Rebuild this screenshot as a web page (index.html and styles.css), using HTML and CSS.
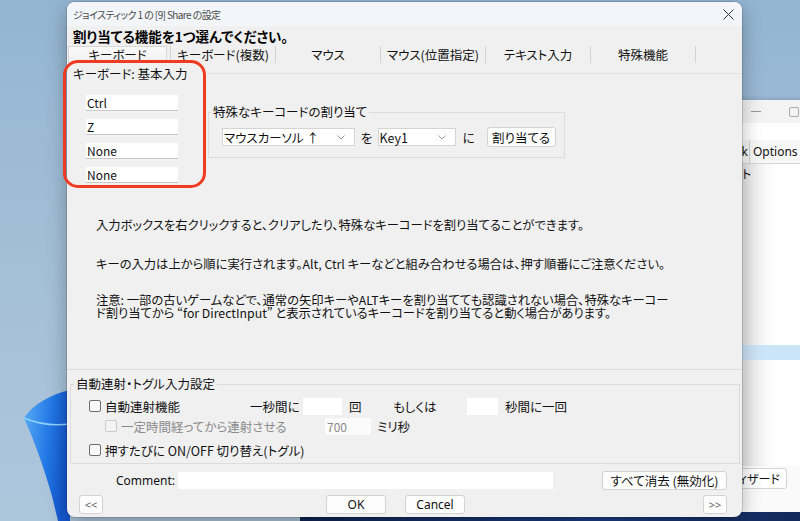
FILE: index.html
```html
<!DOCTYPE html>
<html lang="ja">
<head>
<meta charset="utf-8">
<title>ジョイスティック 1 の [9] Share の設定</title>
<link rel="stylesheet" href="styles.css">
</head>
<body>
<div class="desktop">
  <svg class="bloom" width="80" height="161" viewBox="0 360 80 161">
    <defs>
      <linearGradient id="bl" x1="0" y1="0" x2="1" y2="0.3">
        <stop offset="0" stop-color="#5aaef5"/>
        <stop offset="0.6" stop-color="#2277e6"/>
        <stop offset="1" stop-color="#1458d0"/>
      </linearGradient>
    </defs>
    <path d="M70,390 C52,394 33,404 24,418 C34,440 44,468 52,496 L58,521 L70,521 Z" fill="url(#bl)"/>
    <path d="M24,418 C38,424 54,426 70,424" fill="none" stroke="#8fd2fb" stroke-width="1.5"/>
  </svg>

  <div class="bgwin">
    <div class="bg-title">
      <span class="bg-min"></span>
      <span class="bg-max"></span>
    </div>
    <div class="bg-tool"></div>
    <div class="bg-menu">
      <span class="bg-menu-item bg-hook">Hook</span>
      <span class="bg-sep"></span>
      <span class="bg-menu-item">Options</span>
    </div>
    <div class="bg-list">
      <div class="bg-row">ト</div>
      <div class="bg-sel"></div>
    </div>
    <div class="bg-foot">
      <span class="bg-btn">ウィザード</span>
    </div>
  </div>
  <div class="taskbar"></div>

  <div class="dialog">
    <div class="titlebar">
      <span class="title">ジョイスティック 1 の [9] Share の設定</span>
      <svg class="close" width="11" height="11" viewBox="0 0 11 11"><path d="M0.5,0.5 L10.5,10.5 M10.5,0.5 L0.5,10.5" stroke="#333" stroke-width="1"/></svg>
    </div>
    <div class="heading">割り当てる機能を1つ選んでください。</div>
    <div class="tabs">
      <div class="tab tab-first"><div class="tab-face">キーボード</div></div>
      <div class="tab">キーボード(複数)</div>
      <div class="tab">マウス</div>
      <div class="tab">マウス(位置指定)</div>
      <div class="tab">テキスト入力</div>
      <div class="tab">特殊機能</div>
    </div>

    <div class="panel">
      <div class="panel-top">
        <div class="basic">
          <div class="basic-label">キーボード: 基本入力</div>
          <div class="keys">
            <div class="keybox">Ctrl</div>
            <div class="keybox">Z</div>
            <div class="keybox">None</div>
            <div class="keybox">None</div>
          </div>
        </div>
        <div class="special-col">
          <fieldset class="special">
            <legend>特殊なキーコードの割り当て</legend>
            <div class="special-row">
              <div class="select sel-wide"><span>マウスカーソル ↑</span><svg width="8" height="5" viewBox="0 0 8 5"><polyline points="0.5,0.5 4,4 7.5,0.5" fill="none" stroke="#999"/></svg></div>
              <span class="particle p-wo">を</span>
              <div class="select sel-key"><span>Key1</span><svg width="8" height="5" viewBox="0 0 8 5"><polyline points="0.5,0.5 4,4 7.5,0.5" fill="none" stroke="#999"/></svg></div>
              <span class="particle p-ni">に</span>
              <span class="btn btn-assign">割り当てる</span>
            </div>
          </fieldset>
        </div>
      </div>
      <div class="notes">
        <p class="note1">入力ボックスを右クリックすると、クリアしたり、特殊なキーコードを割り当てることができます。</p>
        <p class="note2">キーの入力は上から順に実行されます。Alt, Ctrl キーなどと組み合わせる場合は、押す順番にご注意ください。</p>
        <p class="note3"><span class="line">注意: 一部の古いゲームなどで、通常の矢印キーやALTキーを割り当てても認識されない場合、特殊なキーコー</span><span class="line">ド割り当てから “for DirectInput” と表示されているキーコードを割り当てると動く場合があります。</span></p>
      </div>
    </div>

    <fieldset class="rapid">
      <legend>自動連射・トグル入力設定</legend>
      <div class="rrow row1">
        <span class="cb-item w161"><span class="cb"></span>自動連射機能</span>
        <span class="w53">一秒間に</span>
        <span class="field w39"></span>
        <span class="ml7 w44">回</span>
        <span class="w74">もしくは</span>
        <span class="field w31"></span>
        <span class="ml7">秒間に一回</span>
      </div>
      <div class="rrow row2">
        <span class="cb-item w220 disabled"><span class="cb cb-dis"></span>一定時間経ってから連射させる</span>
        <span class="field w46 field-dis">700</span>
        <span class="ml6">ミリ秒</span>
      </div>
      <div class="rrow row3">
        <span class="cb-item"><span class="cb"></span>押すたびに ON/OFF 切り替え(トグル)</span>
      </div>
    </fieldset>

    <div class="comment-row">
      <span class="comment-label">Comment:</span>
      <span class="field comment-field"></span>
      <span class="btn btn-clear">すべて消去 (無効化)</span>
    </div>

    <div class="btn-row">
      <span class="btn btn-nav btn-prev">&lt;&lt;</span>
      <span class="btn btn-ok">OK</span>
      <span class="btn btn-cancel">Cancel</span>
      <span class="btn btn-nav btn-next">&gt;&gt;</span>
    </div>
  </div>

  <div class="highlight"></div>
</div>
</body>
</html>
```

FILE: styles.css
```css
* { box-sizing: border-box; }
html, body { margin: 0; padding: 0; }
body {
  width: 800px;
  height: 521px;
  overflow: hidden;
  font-family: "Noto Sans CJK JP", "Noto Sans", sans-serif;
  font-size: 12px;
  color: #111;
  font-feature-settings: "palt";
}
.desktop {
  position: relative;
  width: 800px;
  height: 521px;
  overflow: hidden;
  background: linear-gradient(180deg, #93b5d1 0%, #a2bed7 45%, #aec6dc 100%);
}
.bloom { position: absolute; left: 0; top: 360px; }
.taskbar {
  position: absolute;
  left: 300px;
  top: 512px;
  width: 500px;
  height: 9px;
  background: linear-gradient(90deg, #0f2552, #1b3f86 60%, #12295a);
}

/* background window */
.bgwin {
  position: absolute;
  left: 600px;
  top: 100px;
  width: 215px;
  height: 412px;
  background: #fff;
  display: flex;
  flex-direction: column;
  box-shadow: 0 0 6px rgba(0,0,0,.2);
}
.bg-title {
  height: 23px;
  background: #f3f3f3;
  display: flex;
  align-items: center;
  padding-left: 151px;
}
.bg-min { width: 10px; height: 1px; background: #999; }
.bg-max { width: 10px; height: 10px; border: 1px solid #aaa; border-radius: 2px; margin-left: 28px; }
.bg-tool { height: 17px; background: #fff; }
.bg-menu {
  height: 24px;
  background: #f7f7f7;
  border-bottom: 1px solid #d6d6d6;
  display: flex;
  align-items: center;
  font-family: "Noto Sans", sans-serif;
  font-size: 12px;
  color: #111;
}
.bg-hook { width: 148px; text-align: right; }
.bg-sep { width: 1px; height: 22px; background: #d0d0d0; margin: 0 3px 0 1px; }
.bg-list {
  flex: 1;
  display: flex;
  flex-direction: column;
  background: linear-gradient(90deg, #e4e4e4 140px, #ffffff 175px);
}
.bg-row { padding-left: 142px; height: 20px; line-height: 20px; font-size: 12px; }
.bg-sel { margin-top: 161px; height: 15px; background: #cce4f7; }
.bg-foot { height: 46px; background: #fafafa; display: flex; align-items: flex-start; padding: 2px 0 0 90px; }
.bg-btn {
  width: 97px;
  height: 21px;
  line-height: 19px;
  border: 1px solid #d4d4d4;
  border-radius: 3px;
  background: #fff;
  text-align: right;
  padding-right: 6px;
  font-size: 12px;
}

/* dialog */
.dialog {
  position: absolute;
  left: 67px;
  top: 2px;
  width: 675px;
  height: 515px;
  background: #f0f0f0;
  border-radius: 8px;
  box-shadow: 0 0 0 1px rgba(0,0,0,.12), 0 6px 20px rgba(0,0,0,.3);
  display: flex;
  flex-direction: column;
  overflow: hidden;
}
.titlebar {
  height: 24px;
  flex: none;
  background: #f2f5f9;
  display: flex;
  align-items: center;
  padding-left: 6px;
}
.title { font-size: 10px; letter-spacing: -0.6px; color: #4a4a4a; }
.close { margin-left: auto; margin-right: 8px; }
.heading {
  height: 20px;
  flex: none;
  line-height: 20px;
  padding-left: 6px;
  font-weight: bold;
  font-size: 13.5px;
  color: #000;
}
.tabs { display: flex; height: 17px; flex: none; padding-left: 1px; }
.tab {
  width: 105px;
  height: 17px;
  border-right: 1px solid #d2d2d2;
  text-align: center;
  line-height: 17px;
  font-size: 12.5px;
  color: #111;
}
.tab-first { width: 103px; padding-right: 3px; }
.tab-face {
  height: 17px;
  border: 1px solid #d6d6d6;
  border-bottom: none;
  background: linear-gradient(#fafafa, #f0f0f0);
  line-height: 16px;
}

.panel {
  height: 307px;
  flex: none;
  border-bottom: 1px solid #dcdcdc;
  display: flex;
  flex-direction: column;
}
.panel-top { display: flex; align-items: flex-start; }
.basic { width: 140px; flex: none; padding: 4px 0 0 6px; }
.basic-label { line-height: 14px; font-size: 12.5px; }
.keys { margin-top: 14px; padding-left: 13px; display: flex; flex-direction: column; gap: 8px; }
.keybox {
  width: 92px;
  height: 16px;
  background: #fff;
  border-bottom: 1px solid #c9c9c9;
  padding-left: 1px;
  line-height: 15px;
  font-size: 12px;
}
.special-col { flex: 1; margin-top: 10px; border-top: 1px solid #e2e2e2; padding-left: 1px; }
.special {
  margin: 31px 0 0 0;
  padding: 0;
  width: 357px;
  min-width: 0;
  border: 1px solid #dcdcdc;
}
.special legend, .rapid legend {
  padding: 0 2px;
  margin-left: 2px;
  line-height: 14px;
  font-size: 12.5px;
}
.special-row { display: flex; align-items: center; height: 20px; margin: 8px 0 10px; padding-left: 13px; }
.select {
  height: 18px;
  background: #fff;
  border: 1px solid #d4d4d4;
  display: flex;
  align-items: center;
  justify-content: space-between;
  padding: 0 9px 0 1px;
  font-size: 12.5px;
}
.sel-wide { width: 133px; }
.sel-key { width: 78px; }
.particle { font-size: 12.5px; }
.p-wo { margin-left: 6px; }
.sel-key { margin-left: 5px; }
.p-ni { margin-left: 7px; }
.btn {
  display: flex;
  align-items: center;
  justify-content: center;
  background: #fdfdfd;
  border: 1px solid #d2d2d2;
  border-radius: 3px;
  font-size: 12.5px;
  color: #111;
}
.btn-assign { margin-left: 12px; width: 69px; height: 20px; }

.notes { padding-left: 29px; margin-top: 36px; }
.notes p { margin: 0; line-height: 13px; font-size: 12.3px; color: #111; }
.notes .line { display: block; height: 13px; }
.notes .note2 { margin-top: 26px; }
.notes .note3 { margin-top: 23px; }

.rapid {
  margin: 7px 0 0 3px;
  padding: 0 0 3px 18px;
  width: 670px;
  min-width: 0;
  border: 1px solid #dcdcdc;
  flex: none;
}
.rapid legend { margin-left: -15px; }
.rrow { display: flex; align-items: center; height: 20px; font-size: 12.5px; }
.row1 { margin-top: 5px; }
.row2 { padding-left: 16px; }
.row3 { margin-top: 4px; }
.cb-item { display: flex; align-items: center; gap: 4px; flex: none; }
.cb {
  width: 12px;
  height: 12px;
  border: 1px solid #6e6e6e;
  border-radius: 2px;
  background: #f8f8f8;
  flex: none;
}
.cb-dis { border-color: #cacaca; background: #f4f4f4; }
.disabled { color: #8a8a8a; }
.w161 { width: 161px; }
.w220 { width: 220px; }
.w53 { width: 53px; flex: none; }
.w44 { width: 44px; flex: none; }
.w74 { width: 74px; flex: none; }
.w39 { width: 39px; }
.w31 { width: 31px; }
.w46 { width: 46px; }
.ml7 { margin-left: 7px; }
.ml6 { margin-left: 6px; }
.field {
  height: 17px;
  background: #fff;
  flex: none;
  line-height: 17px;
  padding-left: 2px;
  font-size: 12px;
}
.field-dis { color: #8a8a8a; background: #fbfbfb; }

.comment-row { display: flex; align-items: center; height: 19px; margin-top: 7px; flex: none; }
.comment-label { padding-left: 49px; width: 103px; font-family: "Noto Sans", sans-serif; font-size: 12px; flex: none; }
.comment-field { margin-left: 8px; width: 375px; }
.btn-clear { margin-left: 49px; width: 125px; height: 19px; }

.btn-row { display: flex; align-items: center; height: 19px; margin-top: 5px; flex: none; }
.btn-row .btn { height: 19px; font-family: "Noto Sans", sans-serif; font-size: 12px; }
.btn-nav { width: 24px; color: #666; }
.btn-row .btn-nav { font-size: 11px; color: #666; }
.btn-prev { margin-left: 12px; }
.btn-ok { margin-left: 223px; width: 60px; }
.btn-cancel { margin-left: 19px; width: 60px; }
.btn-next { margin-left: 238px; }

.highlight {
  position: absolute;
  left: 63px;
  top: 60px;
  width: 143px;
  height: 128px;
  border: 3px solid #ef3a24;
  border-radius: 15px;
}
```
